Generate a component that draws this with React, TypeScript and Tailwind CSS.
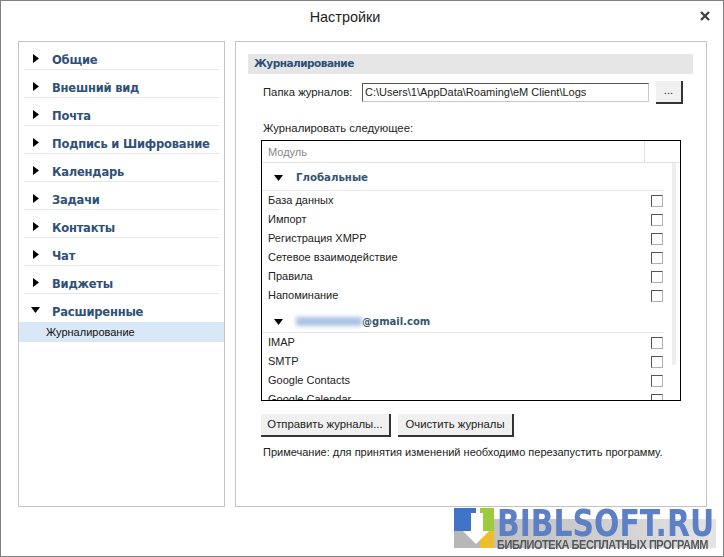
const sections = ['Общие', 'Внешний вид', 'Почта', 'Подпись и Шифрование', 'Календарь', 'Задачи', 'Контакты', 'Чат', 'Виджеты']
const globalModules = ['База данных', 'Импорт', 'Регистрация XMPP', 'Сетевое взаимодействие', 'Правила', 'Напоминание']
const accountModules = ['IMAP', 'SMTP', 'Google Contacts', 'Google Calendar']

const ui = "font-['Liberation_Sans','DejaVu_Sans',sans-serif]"
const heading = "font-['DejaVu_Sans',sans-serif] font-bold text-[#2f5078]"

function ArrowRight() {
  return (
    <svg width="6" height="9" viewBox="0 0 6 9" className="shrink-0">
      <path d="M0 0L6 4.5L0 9Z" fill="#000" />
    </svg>
  )
}

function ArrowDown() {
  return (
    <svg width="9" height="6" viewBox="0 0 9 6" className="shrink-0">
      <path d="M0 0H9L4.5 6Z" fill="#000" />
    </svg>
  )
}

function Checkbox() {
  return <div className="h-[12px] w-[12px] border border-[#b0b0b0] border-t-[#555] border-l-[#555] bg-white" />
}

function ModuleRow({ name }: { name: string }) {
  return (
    <div className="flex h-[19px] shrink-0 items-center justify-between pr-[9px] pl-[6px] text-[11px] text-[#222]">
      <span>{name}</span>
      <Checkbox />
    </div>
  )
}

function ActionButton({ label, width }: { label: string; width: string }) {
  return (
    <button className={`h-[23px] ${width} border-r-2 border-b-2 border-[#333] bg-[#f0f0f0] text-[11.3px] text-[#222]`}>
      {label}
    </button>
  )
}

function Watermark() {
  return (
    <div className="absolute top-[506px] left-[453px] h-[49px] w-[262px]">
      <div className="absolute top-[12px] left-0 h-[29px] w-[262px] bg-gradient-to-r from-[#bdbdbd] via-[#cccccc] to-[#e4e4e4]" />
      <svg width="40" height="41" viewBox="0 0 40 41" className="absolute top-0 left-0">
        <rect x="0" y="1" width="22" height="23" fill="#3f74c8" />
        <rect x="26" y="1" width="14" height="23" fill="#9ccb3b" />
        <rect x="0" y="24" width="26" height="17" fill="#b7b7b7" />
        <rect x="26" y="24" width="14" height="17" fill="#eebd2e" />
        <path d="M17 6H29V24H35L22 37L9 24H17Z" fill="#fff" />
      </svg>
      <div className="absolute top-[1px] left-[43px] w-fit origin-left scale-x-[0.785] font-['DejaVu_Sans',sans-serif] text-[38px] leading-[30px] font-bold whitespace-nowrap text-[#5d7fc6]">
        BIBLSOFT.RU
      </div>
      <div className="absolute top-[31px] left-[43px] w-fit origin-left scale-x-[0.92] font-['Liberation_Sans',sans-serif] text-[12px] leading-[14px] font-bold tracking-[-0.5px] whitespace-nowrap text-[#55585c]">
        БИБЛИОТЕКА БЕСПЛАТНЫХ ПРОГРАММ
      </div>
    </div>
  )
}

export default function App() {
  return (
    <div className={`relative h-[557px] w-[724px] overflow-hidden border border-[#808080] bg-white ${ui}`}>
      <div className="relative flex h-[40px] items-start justify-center pt-[6px] pr-[34px] text-[14.4px] leading-[20px] text-[#222]">
        Настройки
        <svg width="10" height="10" viewBox="0 0 10 10" className="absolute top-[10px] right-[13px]">
          <path d="M1 1L9 9M9 1L1 9" stroke="#444" strokeWidth="2.4" />
        </svg>
      </div>

      <div className="flex gap-[10px] pl-[17px]">
        {/* Левая панель */}
        <div className="h-[466px] w-[207px] border border-[#c4c4c4]">
          {sections.map((s) => (
            <div key={s} className="mx-[5px] flex h-[28px] gap-[13px] border-b border-[#e6e6e6] pt-[10px] pl-[9px]">
              <div className="pt-[2px]"><ArrowRight /></div>
              <span className={`text-[11.5px] leading-[16px] tracking-[-0.2px] whitespace-nowrap ${heading}`}>{s}</span>
            </div>
          ))}
          <div className="mx-[5px] flex h-[28px] gap-[12px] pt-[10px] pl-[7px]">
            <div className="pt-[3px]"><ArrowDown /></div>
            <span className={`text-[11.5px] leading-[16px] tracking-[-0.2px] ${heading}`}>Расширенные</span>
          </div>
          <div className="flex h-[20px] items-center bg-[#d9e8f6] pl-[27px] text-[11px] text-[#111]">Журналирование</div>
        </div>

        {/* Правая панель */}
        <div className="h-[466px] w-[472px] border border-[#c4c4c4] pt-[12px] pl-[12px]">
          <div className={`flex h-[20px] w-[445px] items-center bg-[#e6e6e6] pl-[6px] text-[10.5px] tracking-[-0.5px] ${heading}`}>Журналирование</div>

          <div className="mt-[7px] flex h-[23px] items-center pl-[15px] text-[11.3px] text-[#222]">
            <span className="w-[99px]">Папка журналов:</span>
            <div className="flex h-[19px] w-[287px] items-center border border-[#c8c8c8] border-t-[#555] border-l-[#555] pl-[2px] text-[11px]">
              C:\Users\1\AppData\Roaming\eM Client\Logs
            </div>
            <div className="ml-[7px] flex h-[23px] w-[27px] items-center justify-center border-r-2 border-b-2 border-[#333] bg-[#f0f0f0] pb-[2px]">...</div>
          </div>

          <div className="mt-[16px] pl-[15px] text-[11.3px] leading-[16px] text-[#222]">Журналировать следующее:</div>

          <div className="mt-[4px] ml-[13px] h-[261px] w-[420px] overflow-hidden border border-black bg-white">
            <div className="flex h-[22px] border-b border-[#e2e2e2]">
              <div className="flex w-[383px] items-center border-r border-[#e2e2e2] pt-[1px] pl-[6px] text-[11px] text-[#888]">Модуль</div>
            </div>
            <div className="flex">
              <div className="flex w-[410px] flex-col">
                <div className="mr-[8px] flex h-[28px] shrink-0 items-center gap-[13px] border-b border-[#e6e6e6] pt-[3px] pl-[12px]">
                  <ArrowDown />
                  <span className="font-['DejaVu_Sans',sans-serif] text-[10.2px] font-bold text-[#35566f]">Глобальные</span>
                </div>
                {globalModules.map((m) => <ModuleRow key={m} name={m} />)}
                <div className="mr-[8px] flex h-[28px] shrink-0 items-center gap-[13px] border-b border-[#e6e6e6] pt-[6px] pl-[12px]">
                  <ArrowDown />
                  <span className="flex items-center font-['DejaVu_Sans',sans-serif] text-[10px] font-bold text-[#35566f]">
                    <span className="h-[9px] w-[66px] bg-[#a9c3e4] blur-[2px]" />@gmail.com
                  </span>
                </div>
                {accountModules.map((m) => <ModuleRow key={m} name={m} />)}
              </div>
              <div className="h-[202px] w-[4px] bg-[#eeeeee]" />
            </div>
          </div>

          <div className="mt-[13px] ml-[13px] flex gap-[7px]">
            <ActionButton label="Отправить журналы..." width="w-[130px]" />
            <ActionButton label="Очистить журналы" width="w-[116px]" />
          </div>

          <div className="mt-[7px] pl-[15px] text-[11px] leading-[16px] text-[#222]">
            Примечание: для принятия изменений необходимо перезапустить программу.
          </div>
        </div>
      </div>

      <Watermark />
    </div>
  )
}
